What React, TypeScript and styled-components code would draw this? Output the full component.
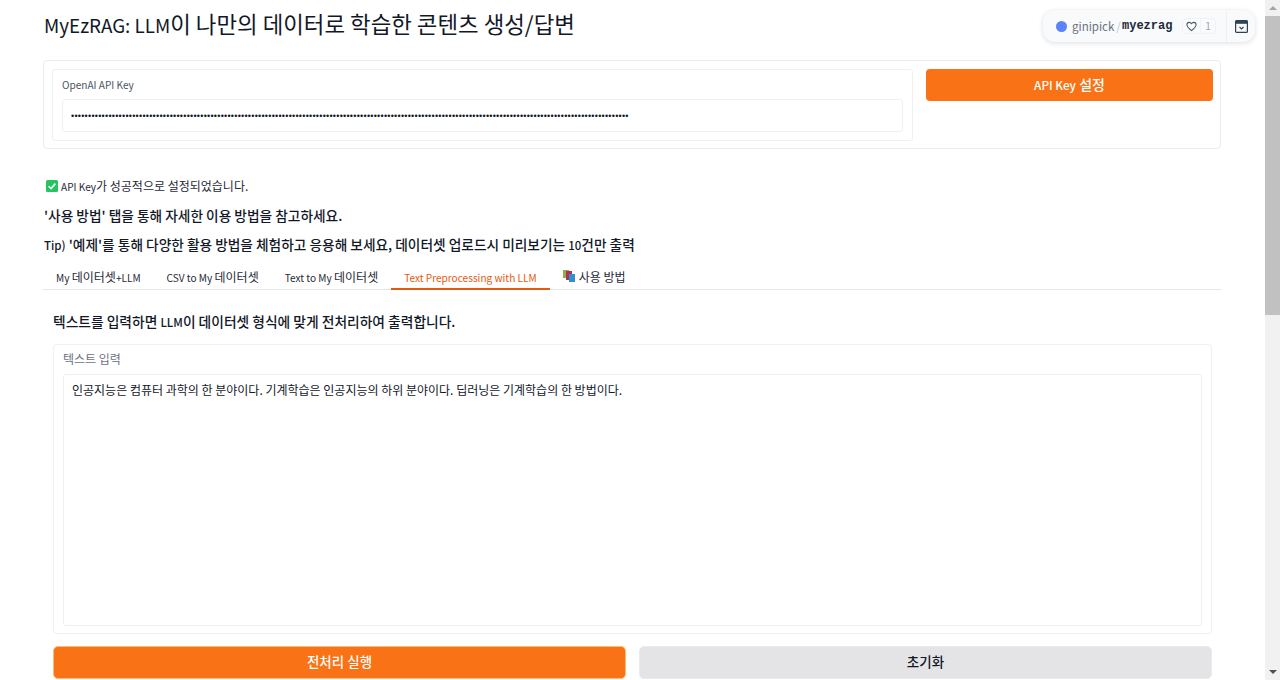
import React from 'react';
import styled, { createGlobalStyle } from 'styled-components';

const GlobalStyle = createGlobalStyle`
  html, body {
    margin: 0;
    padding: 0;
    height: 100%;
    overflow: hidden;
    background: #fff;
  }
  * {
    box-sizing: border-box;
  }
  body {
    font-family: "Noto Sans CJK KR", "Noto Sans", sans-serif;
    color: #111827;
  }
`;

// latin runs sit smaller than the hangul around them
const Latin = styled.span`
  font-size: 0.84em;
`;

const tabs = [
  <span><Latin>My </Latin>데이터셋<Latin>+LLM</Latin></span>,
  <span><Latin>CSV to My </Latin>데이터셋</span>,
  <span><Latin>Text to My </Latin>데이터셋</span>,
  <span><Latin>Text Preprocessing with LLM</Latin></span>,
];

const App: React.FC = () => {
  return (
    <>
      <GlobalStyle />
      <Shell>
        <Page>
          <Title><Latin>MyEzRAG: LLM</Latin>이 나만의 데이터로 학습한 콘텐츠 생성/답변</Title>
          <KeyPanel>
            <KeyField>
              <FieldLabel><Latin>OpenAI API Key</Latin></FieldLabel>
              <KeyInput>{'•'.repeat(164)}</KeyInput>
            </KeyField>
            <KeyButton><Latin>API Key</Latin> 설정</KeyButton>
          </KeyPanel>

          <Status>
            <CheckIcon />
            <span><Latin>API Key</Latin>가 성공적으로 설정되었습니다.</span>
          </Status>
          <Note>'사용 방법' 탭을 통해 자세한 이용 방법을 참고하세요.</Note>
          <Note><Latin>Tip)</Latin> '예제'를 통해 다양한 활용 방법을 체험하고 응용해 보세요, 데이터셋 업로드시 미리보기는 <Latin>10</Latin>건만 출력</Note>

          <TabBar>
            {tabs.map((tab, i) => (
              <Tab key={i} $active={i === 3}>{tab}</Tab>
            ))}
            <Tab>
              <BooksIcon />
              <span>사용 방법</span>
            </Tab>
          </TabBar>

          <TabBody>
            <Heading>텍스트를 입력하면 <Latin>LLM</Latin>이 데이터셋 형식에 맞게 전처리하여 출력합니다.</Heading>
            <TextBlock>
              <TextLabel>텍스트 입력</TextLabel>
              <TextArea>인공지능은 컴퓨터 과학의 한 분야이다. 기계학습은 인공지능의 하위 분야이다. 딥러닝은 기계학습의 한 방법이다.</TextArea>
            </TextBlock>
            <Actions>
              <ActionButton $primary>전처리 실행</ActionButton>
              <ActionButton>초기화</ActionButton>
            </Actions>
          </TabBody>
        </Page>

        <SpaceBadge>
          <Dot />
          <Owner>ginipick</Owner>
          <Slash>/</Slash>
          <RepoName>myezrag</RepoName>
          <Likes>
            <LikeIcon>
              <svg width="11" height="11" viewBox="0 0 24 24" fill="none" stroke="#4b5563" strokeWidth="2.2" strokeLinejoin="round">
                <path d="M12 21C5 15.5 2 12 2 8.2 2 5.3 4.3 3 7 3c2 0 3.9 1.1 5 3 1.1-1.9 3-3 5-3 2.7 0 5 2.3 5 5.2 0 3.8-3 7.3-10 12.8z" />
              </svg>
            </LikeIcon>
            <LikeCount>1</LikeCount>
          </Likes>
          <BadgeMenu>
            <svg width="13" height="13" viewBox="0 0 13 13" fill="none">
              <rect x="0.6" y="0.6" width="11.8" height="11.8" rx="1" stroke="#334155" strokeWidth="1.2" />
              <rect x="0.6" y="0.6" width="11.8" height="3.2" fill="#334155" />
              <path d="M4.5 7 6.5 9 8.5 7" stroke="#334155" strokeWidth="1.1" />
            </svg>
          </BadgeMenu>
        </SpaceBadge>

        <Scrollbar>
          <ScrollArrow $up />
          <ScrollThumb />
          <ScrollTrack />
          <ScrollArrow />
        </Scrollbar>
      </Shell>
    </>
  );
};

const CheckIcon = () => (
  <svg width="12" height="12" viewBox="0 0 12 12" style={{ marginRight: 3 }}>
    <rect width="12" height="12" rx="1.5" fill="#22c55e" />
    <path d="M2.6 6.2 5 8.6 9.4 3.6" stroke="#fff" strokeWidth="1.6" fill="none" />
  </svg>
);

const BooksIcon = () => (
  <svg width="12" height="12" viewBox="0 0 12 12" style={{ marginRight: 4 }}>
    <rect x="0" y="0" width="6" height="8" fill="#8db04a" />
    <rect x="3" y="1" width="6" height="9" fill="#b52f55" />
    <rect x="6" y="4" width="6" height="8" fill="#2f8fd0" />
  </svg>
);

const Shell = styled.div`
  position: relative;
  display: flex;
  width: 1280px;
  height: 680px;
  overflow: hidden;
`;

const Page = styled.main`
  flex: 1;
  min-width: 0;
  padding: 0 44px 0 43px;
`;

const Title = styled.h1`
  margin: 0;
  padding: 8px 0 0 1px;
  height: 60px;
  font-size: 22.4px;
  line-height: 30px;
  font-weight: 400;
  color: #111827;
`;

const KeyPanel = styled.section`
  display: flex;
  gap: 13px;
  height: 89px;
  padding: 8px 7px 8px 8px;
  border: 1px solid #e9ebee;
  border-radius: 4px;
`;

const KeyField = styled.div`
  flex: none;
  width: 861px;
  height: 72px;
  padding: 5px 9px 0 9px;
  border: 1px solid #eef0f2;
  border-radius: 3px;
`;

const FieldLabel = styled.div`
  height: 24px;
  font-size: 12px;
  line-height: 18px;
  color: #4b5563;
`;

const KeyInput = styled.div`
  height: 33px;
  padding: 0 8px;
  border: 1px solid #eef0f2;
  border-radius: 3px;
  overflow: hidden;
  white-space: nowrap;
  font-family: "Liberation Sans", sans-serif;
  font-size: 9px;
  line-height: 33px;
  letter-spacing: 0.25px;
  color: #111827;
`;

const KeyButton = styled.button`
  flex: 1;
  height: 32px;
  padding: 0 0 2px;
  border: none;
  border-radius: 4px;
  background: #f97316;
  color: #fff;
  font-family: inherit;
  font-size: 14px;
  font-weight: 500;
`;

const Status = styled.p`
  display: flex;
  align-items: center;
  margin: 28px 0 0 3px;
  height: 18px;
  font-size: 12px;
  line-height: 18px;
  color: #1f2937;
`;

const Note = styled.p`
  margin: 12px 0 0 1px;
  height: 17px;
  font-size: 13.7px;
  line-height: 17px;
  font-weight: 500;
  color: #111827;
`;

const TabBar = styled.nav`
  display: flex;
  margin-top: 13px;
  height: 24px;
  border-bottom: 1px solid #e5e7eb;
`;

const Tab = styled.div<{ $active?: boolean }>`
  display: flex;
  align-items: center;
  height: 24px;
  padding: 0 13px 2px;
  font-size: 12px;
  white-space: pre;
  color: ${(p) => (p.$active ? '#ea580c' : '#1f2937')};
  border-bottom: 2px solid ${(p) => (p.$active ? '#ea580c' : 'transparent')};
`;

const TabBody = styled.section`
  padding: 0 9px 0 10px;
`;

const Heading = styled.h2`
  margin: 0;
  padding-top: 21px;
  height: 54px;
  font-size: 13.75px;
  line-height: 20px;
  font-weight: 500;
  color: #111827;
`;

const TextBlock = styled.div`
  height: 290px;
  padding: 5px 9px 0 9px;
  border: 1px solid #eef0f2;
  border-radius: 4px;
`;

const TextLabel = styled.div`
  height: 24px;
  font-size: 12px;
  line-height: 17px;
  color: #6b7280;
`;

const TextArea = styled.div`
  height: 252px;
  padding: 6px 8px;
  border: 1px solid #eef0f2;
  border-radius: 3px;
  font-size: 12px;
  line-height: 17px;
  color: #111827;
`;

const Actions = styled.div`
  display: grid;
  grid-template-columns: 1fr 1fr;
  gap: 13px;
  margin-top: 12px;
`;

const ActionButton = styled.button<{ $primary?: boolean }>`
  height: 33px;
  padding: 0 0 4px;
  border: 1px solid ${(p) => (p.$primary ? '#fdba74' : '#ebebee')};
  border-radius: 5px;
  background: ${(p) => (p.$primary ? '#f97316' : '#e4e4e7')};
  color: ${(p) => (p.$primary ? '#fff' : '#111827')};
  font-family: inherit;
  font-size: 13.5px;
  font-weight: 500;
`;

const SpaceBadge = styled.div`
  position: absolute;
  top: 10px;
  left: 1043px;
  display: flex;
  align-items: center;
  width: 212px;
  height: 32px;
  padding-left: 13px;
  border-radius: 12px;
  background: #f8fafc;
  box-shadow: 0 1px 5px rgba(15, 23, 42, 0.14);
  font-size: 11.5px;
`;

const Dot = styled.span`
  flex: none;
  width: 11px;
  height: 11px;
  margin-right: 5px;
  border-radius: 50%;
  background: #5b82f6;
`;

const Owner = styled.span`
  width: 43px;
  color: #6b7280;
`;

const Slash = styled.span`
  width: 7px;
  text-align: center;
  color: #c2c7cf;
`;

const RepoName = styled.span`
  width: 60px;
  font-family: "Liberation Mono", monospace;
  font-size: 12px;
  font-weight: 700;
  color: #1f2937;
`;

const Likes = styled.div`
  flex: none;
  display: flex;
  align-items: stretch;
  width: 34px;
  height: 16px;
  border: 1px solid #f0f2f5;
  border-radius: 4px;
`;

const LikeIcon = styled.span`
  display: flex;
  align-items: center;
  justify-content: center;
  width: 18px;
  border-right: 1px solid #f0f2f5;
`;

const LikeCount = styled.span`
  flex: 1;
  text-align: center;
  font-size: 10px;
  line-height: 14px;
  color: #9ca3af;
`;

const BadgeMenu = styled.div`
  flex: none;
  display: flex;
  align-items: center;
  justify-content: center;
  height: 32px;
  width: 29px;
  margin-left: 10px;
  border-left: 1px solid #eef0f3;
`;

const Scrollbar = styled.aside`
  display: flex;
  flex-direction: column;
  flex: none;
  width: 15px;
  height: 680px;
  background: #f1f1f1;
`;

const ScrollArrow = styled.div<{ $up?: boolean }>`
  flex: none;
  height: 16px;
  display: flex;
  align-items: center;
  justify-content: center;
  &::before {
    content: '';
    border-left: 4px solid transparent;
    border-right: 4px solid transparent;
    ${(p) => (p.$up ? 'border-bottom: 4px solid #a3a3a3;' : 'border-top: 4px solid #505050;')}
  }
`;

const ScrollThumb = styled.div`
  flex: none;
  height: 299px;
  background: #c1c1c1;
`;

const ScrollTrack = styled.div`
  flex: 1;
`;

export default App;
